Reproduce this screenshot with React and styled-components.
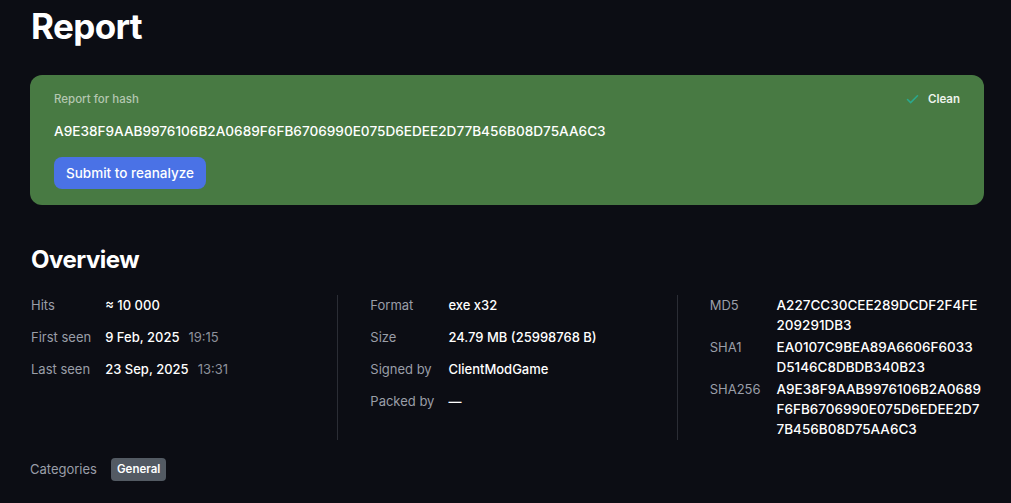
import React from "react";
import styled, { createGlobalStyle } from "styled-components";
import { Check } from "lucide-react";

const GlobalStyle = createGlobalStyle`
  html, body {
    margin: 0;
    background: #0c0d14;
  }
  body {
    font-family: Inter, "Noto Sans", sans-serif;
    color: #ffffff;
    -webkit-font-smoothing: antialiased;
  }
`;

const Page = styled.div`
  padding: 2px 27px 0 30px;
  min-height: 503px;
  box-sizing: border-box;
`;

const Title = styled.h1`
  margin: 0 0 0 1px;
  font-size: 35px;
  line-height: 48px;
  font-weight: 700;
  letter-spacing: -0.6px;
`;

const HashCard = styled.div`
  margin-top: 25px;
  background: #487a43;
  border-radius: 12px;
  padding: 16px 24px 16px;
  display: flex;
  justify-content: space-between;
  align-items: flex-start;
`;

const CardMain = styled.div`
  display: flex;
  flex-direction: column;
  align-items: flex-start;
`;

const CardLabel = styled.div`
  font-size: 11.5px;
  line-height: 16px;
  font-weight: 500;
  color: #b4c7b0;
`;

const HashText = styled.div`
  margin-top: 14px;
  font-size: 13.6px;
  line-height: 20px;
  font-weight: 500;
`;

const ReanalyzeButton = styled.button`
  margin-top: 16px;
  height: 32px;
  padding: 0 12px;
  border: none;
  border-radius: 8px;
  background: #4a72e6;
  color: #ffffff;
  font-family: inherit;
  font-size: 13.5px;
  font-weight: 500;
  cursor: pointer;
`;

const Verdict = styled.div`
  display: flex;
  align-items: center;
  gap: 8px;
  font-size: 11.5px;
  line-height: 16px;
  font-weight: 600;
  color: #eef3ec;
`;

const SectionTitle = styled.h2`
  margin: 39px 0 0 1px;
  font-size: 24px;
  line-height: 32px;
  font-weight: 700;
  letter-spacing: -0.5px;
`;

const Columns = styled.div`
  display: flex;
  margin-top: 19px;
`;

const Column = styled.div`
  flex: 1 1 0;
  min-width: 0;
  padding: 0 32px;
  border-left: 1px solid #2b2d35;
  min-height: 145px;
  &:first-child {
    padding-left: 1px;
    border-left: none;
  }
  &:last-child {
    padding-right: 0;
  }
`;

const InfoGrid = styled.dl`
  margin: 0;
  display: grid;
  grid-template-columns: auto 1fr;
  column-gap: ${(p) => p.$labelGap}px;
  row-gap: ${(p) => p.$rowGap}px;
  font-size: 13px;
  line-height: 20px;
`;

const Label = styled.dt`
  color: #9a9ea8;
  white-space: nowrap;
`;

const Value = styled.dd`
  margin: 0;
  font-weight: 500;
  color: #ffffff;
  font-size: ${(p) => (p.$hash ? "13.5px" : "13px")};
`;

const HashLine = styled.span`
  display: block;
  white-space: nowrap;
`;

const Muted = styled.span`
  margin-left: 9px;
  color: #8d919b;
  font-weight: 400;
`;

const CategoryRow = styled.div`
  margin-top: 16px;
  display: flex;
  align-items: center;
  gap: 14px;
  font-size: 13px;
  color: #9a9ea8;
`;

const Badge = styled.span`
  display: inline-block;
  margin-top: 2px;
  padding: 3px 6px;
  border-radius: 4px;
  background: #535a63;
  color: #ffffff;
  font-size: 11.5px;
  line-height: 17px;
  font-weight: 600;
`;

const hash = "A9E38F9AAB9976106B2A0689F6FB6706990E075D6EDEE2D77B456B08D75AA6C3";

const hashes = [
  { label: "MD5", lines: ["A227CC30CEE289DCDF2F4FE", "209291DB3"] },
  { label: "SHA1", lines: ["EA0107C9BEA89A6606F6033", "D5146C8DBDB340B23"] },
  {
    label: "SHA256",
    lines: ["A9E38F9AAB9976106B2A0689", "F6FB6706990E075D6EDEE2D7", "7B456B08D75AA6C3"],
  },
];

export default function App() {
  return (
    <>
      <GlobalStyle />
      <Page>
        <Title>Report</Title>
        <HashCard>
          <CardMain>
            <CardLabel>Report for hash</CardLabel>
            <HashText>{hash}</HashText>
            <ReanalyzeButton>Submit to reanalyze</ReanalyzeButton>
          </CardMain>
          <Verdict>
            <Check size={15} strokeWidth={2.5} color="#2ba88d" />
            Clean
          </Verdict>
        </HashCard>

        <SectionTitle>Overview</SectionTitle>
        <Columns>
          <Column>
            <InfoGrid $rowGap={12} $labelGap={14}>
              <Label>Hits</Label>
              <Value>≈ 10 000</Value>
              <Label>First seen</Label>
              <Value>
                9 Feb, 2025<Muted>19:15</Muted>
              </Value>
              <Label>Last seen</Label>
              <Value>
                23 Sep, 2025<Muted>13:31</Muted>
              </Value>
            </InfoGrid>
          </Column>
          <Column>
            <InfoGrid $rowGap={12} $labelGap={14}>
              <Label>Format</Label>
              <Value>exe x32</Value>
              <Label>Size</Label>
              <Value>24.79 MB (25998768 B)</Value>
              <Label>Signed by</Label>
              <Value>ClientModGame</Value>
              <Label>Packed by</Label>
              <Value>—</Value>
            </InfoGrid>
          </Column>
          <Column>
            <InfoGrid $rowGap={2} $labelGap={16}>
              {hashes.map((h) => (
                <React.Fragment key={h.label}>
                  <Label>{h.label}</Label>
                  <Value $hash>
                    {h.lines.map((line) => (
                      <HashLine key={line}>{line}</HashLine>
                    ))}
                  </Value>
                </React.Fragment>
              ))}
            </InfoGrid>
          </Column>
        </Columns>
        <CategoryRow>
          Categories
          <Badge>General</Badge>
        </CategoryRow>
      </Page>
    </>
  );
}
